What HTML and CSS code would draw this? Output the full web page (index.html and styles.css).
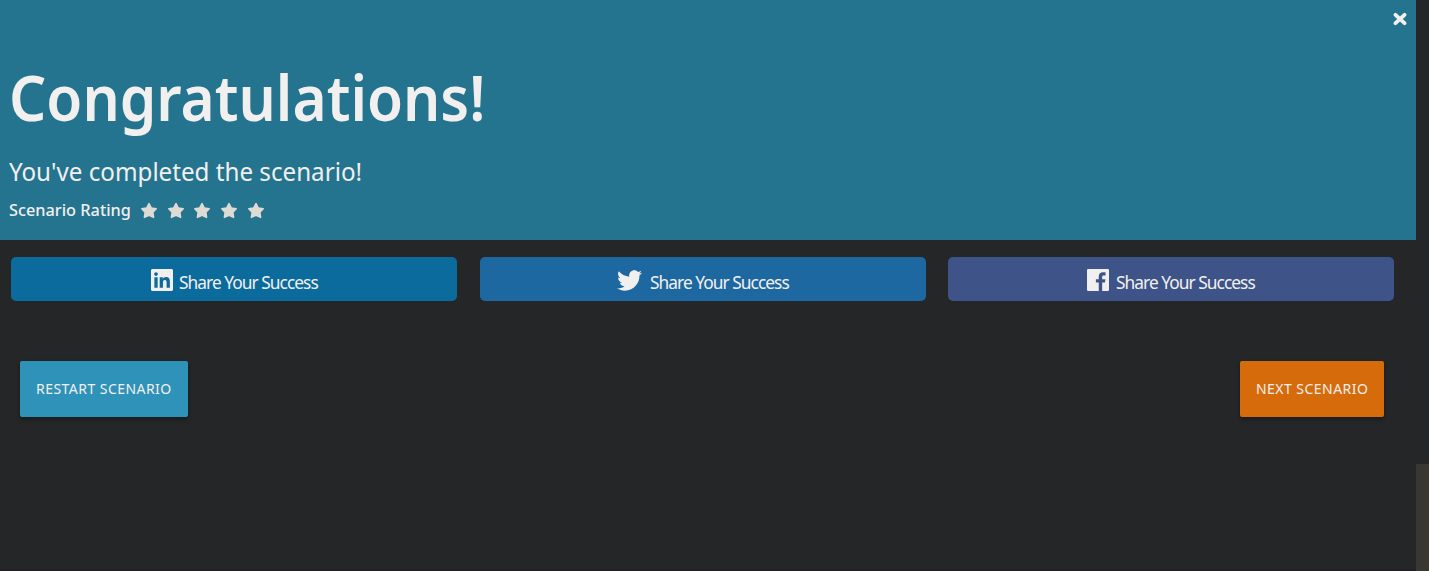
FILE: index.html
```
<!DOCTYPE html>
<html lang="en">
<head>
<meta charset="utf-8">
<title>Congratulations!</title>
<link rel="stylesheet" href="styles.css">
</head>
<body>
<div class="layout">
  <main class="dialog">
    <header class="hero">
      <button class="close" aria-label="Close"><svg viewBox="0 0 14 14" width="14" height="14"><path d="M2.500 2.800L11.500 11.200M11.500 2.800L2.500 11.200"/></svg></button>
      <h1><span>Congratulations!</span></h1>
      <p class="subtitle"><span>You've completed the scenario!</span></p>
      <div class="rating">
        <span class="rating-label"><span>Scenario Rating</span></span>
        <div class="stars">
          <svg viewBox="0 0 18 17"><use href="#star"/></svg>
          <svg viewBox="0 0 18 17"><use href="#star"/></svg>
          <svg viewBox="0 0 18 17"><use href="#star"/></svg>
          <svg viewBox="0 0 18 17"><use href="#star"/></svg>
          <svg viewBox="0 0 18 17"><use href="#star"/></svg>
        </div>
      </div>
    </header>
    <div class="share-row">
      <a class="share linkedin">
        <svg width="22" height="22" viewBox="0 0 448 448"><path fill-rule="evenodd" d="M416 0H31.900C14.300 0 0 14.500 0 32.300v383.400C0 433.500 14.300 448 31.900 448H416c17.600 0 32-14.500 32-32.300V32.300C448 14.500 433.600 0 416 0zM135.400 384H69V170.200h66.500V384zM102.200 141c-21.300 0-38.500-17.300-38.500-38.500S80.900 64 102.200 64c21.200 0 38.500 17.300 38.500 38.500 0 21.300-17.200 38.500-38.500 38.500zM384.300 384h-66.400V280c0-24.800-.5-56.700-34.500-56.700-34.600 0-39.900 27-39.900 54.900V384h-66.400V170.200h63.700v29.200h.9c8.900-16.800 30.600-34.500 62.900-34.500 67.200 0 79.700 44.300 79.700 101.900V384z"/></svg>
        <span class="share-text">Share Your Success</span>
      </a>
      <a class="share twitter">
        <svg class="bird" width="25" height="21" viewBox="0 48 512 416"><path d="M459.370 151.716c.325 4.548.325 9.097.325 13.645 0 138.720-105.583 298.558-298.558 298.558-59.452 0-114.680-17.219-161.137-47.106 8.447.974 16.568 1.299 25.340 1.299 49.055 0 94.213-16.568 130.274-44.832-46.132-.975-84.792-31.188-98.112-72.772 6.498.974 12.995 1.624 19.818 1.624 9.421 0 18.843-1.300 27.614-3.573-48.081-9.747-84.143-51.980-84.143-102.985v-1.299c13.969 7.797 30.214 12.670 47.431 13.319-28.264-18.843-46.781-51.005-46.781-87.391 0-19.492 5.197-37.360 14.294-52.954 51.655 63.675 129.300 105.258 216.365 109.807-1.624-7.797-2.599-15.918-2.599-24.040 0-57.828 46.782-104.934 104.934-104.934 30.213 0 57.502 12.670 76.670 33.137 23.715-4.548 46.456-13.320 66.599-25.340-7.798 24.366-24.366 44.833-46.132 57.827 21.117-2.273 41.584-8.122 60.426-16.243-14.292 20.791-32.161 39.308-52.628 54.253z"/></svg>
        <span class="share-text">Share Your Success</span>
      </a>
      <a class="share facebook">
        <svg width="22" height="22" viewBox="0 0 448 448"><path d="M423 0H25C11 0 0 11 0 25v398c0 14 11 25 25 25h214V274h-58v-67h58v-50c0-58 35-89 87-89 25 0 46 2 52 3v60h-36c-28 0-33 13-33 33v43h66l-9 67h-57v174h114c14 0 25-11 25-25V25c0-14-11-25-25-25z"/></svg>
        <span class="share-text">Share Your Success</span>
      </a>
    </div>
    <div class="actions">
      <button class="action restart"><span>RESTART SCENARIO</span></button>
      <button class="action next"><span>NEXT SCENARIO</span></button>
    </div>
  </main>
  <aside class="gutter"></aside>
</div>
<svg width="0" height="0" class="defs"><symbol id="star" viewBox="0 0 18 17"><path d="M9 1.500L11.400 6L16.200 6.700L12.900 10.300L13.600 15.400L9 13.300L4.400 15.400L5.100 10.300L1.800 6.700L6.600 6Z"/></symbol></svg>
</body>
</html>
```
FILE: styles.css
```
* { box-sizing: border-box; }
body {
  margin: 0;
  height: 571px;
  overflow: hidden;
  background: #252628;
  color: #f2f0ee;
  font-family: "Noto Sans", "Open Sans", sans-serif;
}
.layout { display: flex; height: 571px; border-bottom: 2px solid #222124; }
.dialog { width: 1416px; }
.gutter { flex: 1; padding-top: 464px; background: #252627; }
.gutter::after { content: ""; display: block; height: 107px; background: #383731; }
.defs { position: absolute; }
button { border: 0; padding: 0; font: inherit; color: inherit; }
.hero { position: relative; height: 240px; padding: 59px 9px 0; background: #24748f; }
.close { position: absolute; top: 12px; right: 9px; width: 14px; height: 14px; background: none; }
.close svg { display: block; fill: none; stroke: #f2f0ee; stroke-width: 3.8; stroke-linecap: round; }
h1, p { margin: 0; white-space: nowrap; }
h1 span, .subtitle span, .rating-label span, .share-text, .action span {
  display: inline-block;
  white-space: nowrap;
  transform-origin: left center;
}
h1 { height: 80px; font-size: 64px; line-height: 76px; font-weight: 600; }
h1 span { transform: scaleX(.914); }
.subtitle { height: 61px; padding-top: 14px; font-size: 25px; line-height: 36px; }
.subtitle span { transform: scaleX(.967); }
.rating { display: flex; height: 20px; font-size: 16px; line-height: 20px; font-weight: 500; }
.rating-label { width: 131px; }
.rating-label span { transform: scaleX(1.018); }
.stars { display: flex; gap: 8.700px; padding-top: 2px; }
.stars svg { width: 18px; height: 17px; fill: #dedbd5; stroke: #dedbd5; stroke-width: 1.5; stroke-linejoin: round; }
.share-row { display: grid; grid-template-columns: repeat(3, 446px); column-gap: 22.500px; padding: 17px 11px 0; }
.share { display: flex; height: 44px; padding: 12px 0 0 140px; border-radius: 5px; }
.share svg { flex: none; fill: #f2f0ee; }
.linkedin { background: #0c6b9d; }
.twitter { padding-left: 137px; background: #1e68a2; }
.twitter svg { margin-top: 1px; }
.facebook { padding-left: 139px; background: #3e5488; }
.share-text { margin-left: 6px; font-size: 18px; line-height: 26px; letter-spacing: -1px; transform: scaleX(.963); }
.twitter .share-text { margin-left: 8px; }
.facebook .share-text { margin-left: 7px; }
.actions { display: flex; justify-content: space-between; padding: 60px 32px 0 20px; }
.action { height: 56px; padding: 0 0 2px 16px; border-radius: 2px; text-align: left; font-size: 14px; letter-spacing: .46px; box-shadow: 0 2px 4px rgba(0,0,0,.35); }
.restart { width: 168px; background: #2f92b8; }
.next { width: 144px; background: #d66b0c; }
```
